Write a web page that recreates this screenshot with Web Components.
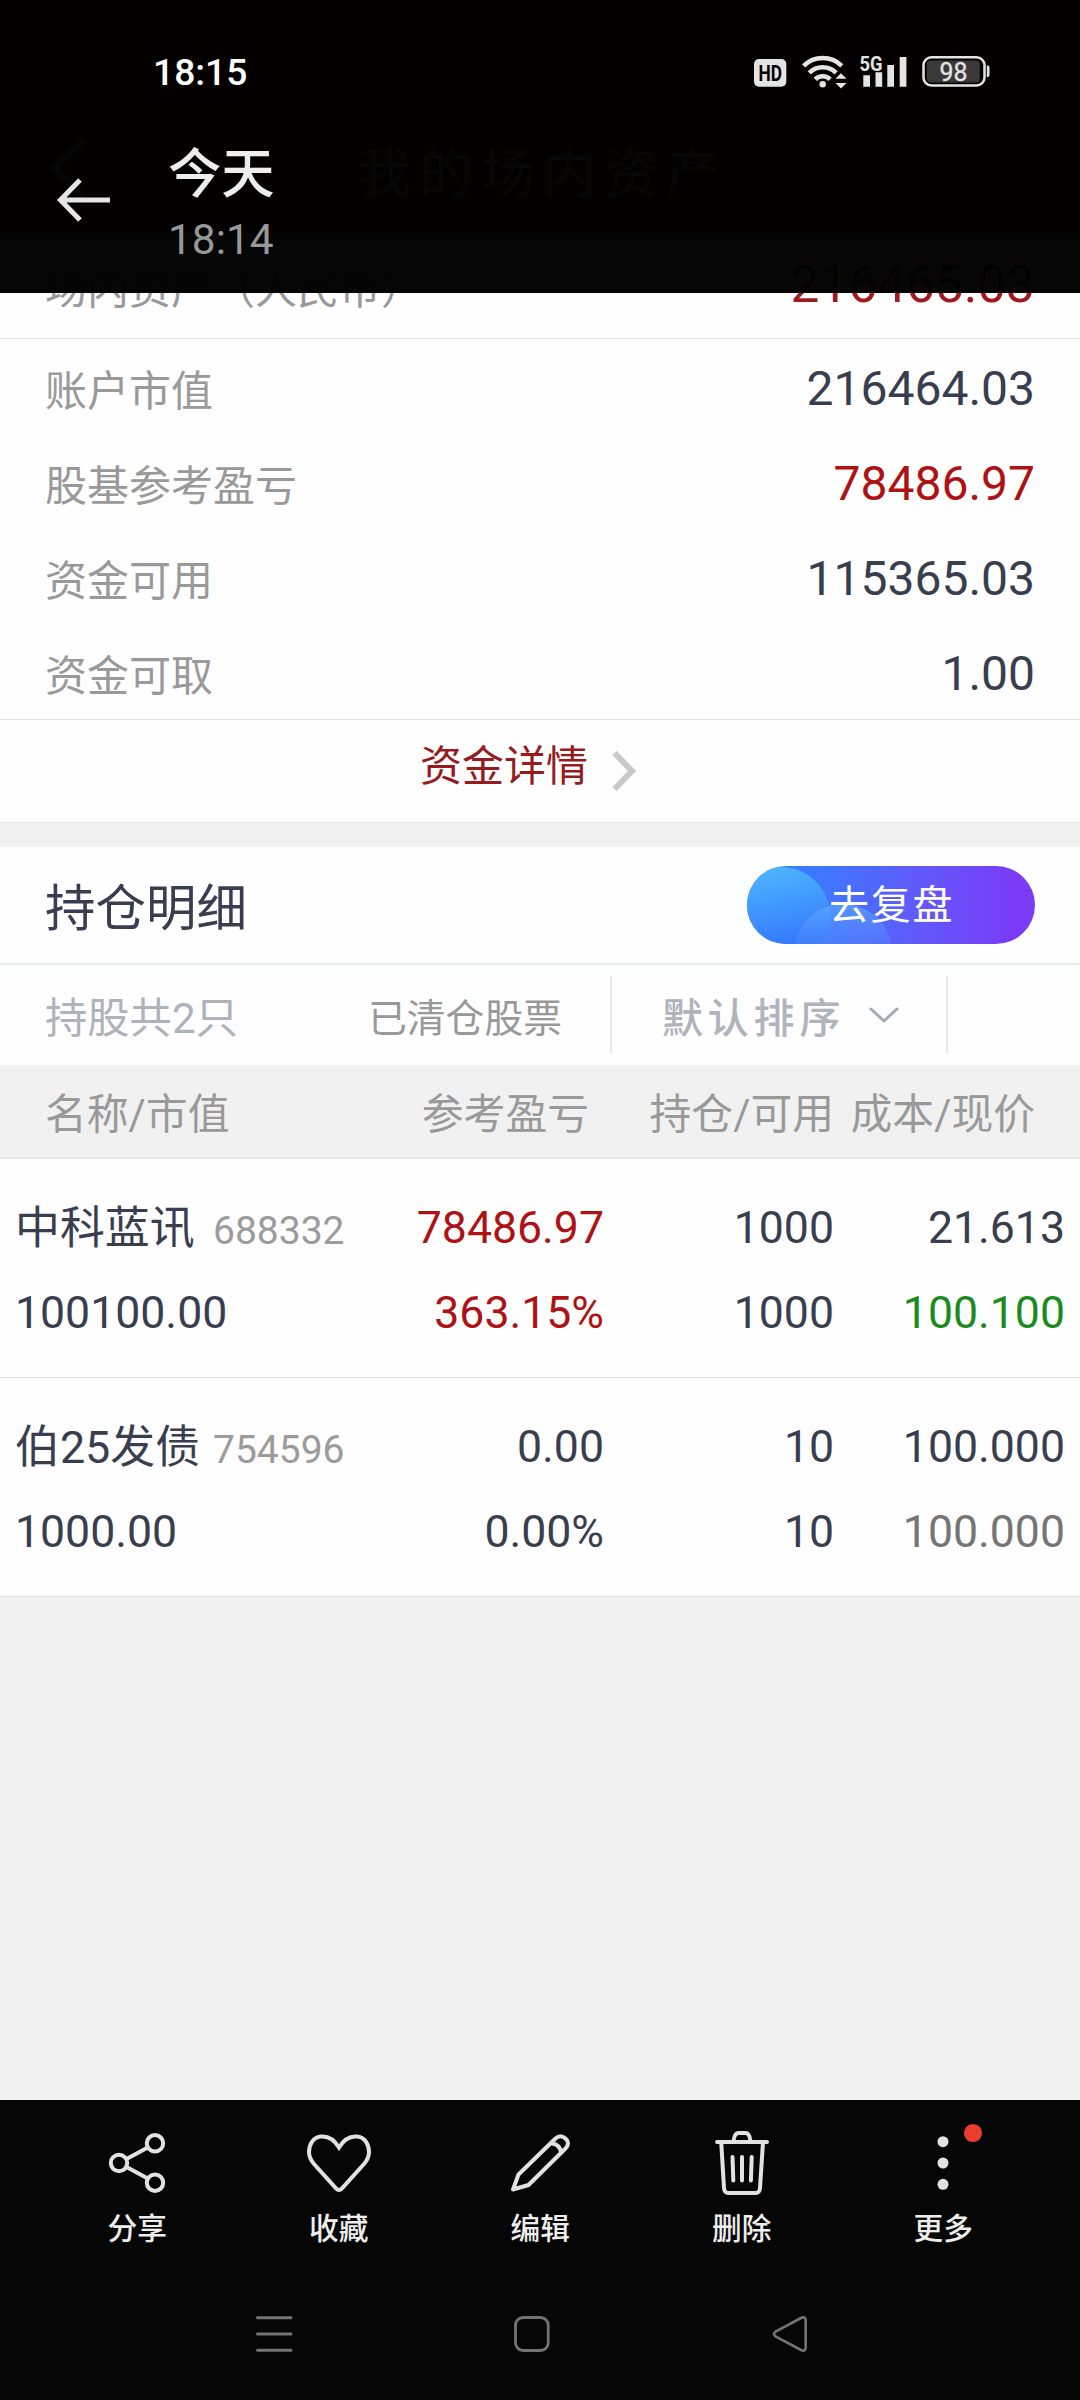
<!DOCTYPE html>
<html lang="zh-CN">
<head>
<meta charset="utf-8">
<title>我的场内资产</title>
<style>
html,body{margin:0;padding:0;background:#f1f1f1}
body{width:1080px;height:2400px;overflow:hidden;font-family:Roboto,"Noto Sans CJK SC",sans-serif;color:#383e50;--line:#e3e3e3;--red:#ae1214}
</style>
</head>
<body>
<photo-viewer>
  <account-page slot="photo">
    <app-header>我的场内资产</app-header>
    <fund-row label="场内资产（人民币）" value="216465.03" total></fund-row>
    <fund-list>
      <fund-row label="账户市值" value="216464.03"></fund-row>
      <fund-row label="股基参考盈亏" value="78486.97" tone="up"></fund-row>
      <fund-row label="资金可用" value="115365.03"></fund-row>
      <fund-row label="资金可取" value="1.00"></fund-row>
    </fund-list>
    <fund-link>资金详情</fund-link>
    <section-head>持仓明细<review-button slot="action">去复盘</review-button></section-head>
    <filter-bar><span slot="count">持股共2只</span><span slot="cleared">已清仓股票</span><span slot="sort">默认排序</span></filter-bar>
    <holding-head><span>名称/市值</span><span>参考盈亏</span><span>持仓/可用</span><span>成本/现价</span></holding-head>
    <holding-row name="中科蓝讯" code="688332" market="100100.00" profit="78486.97" rate="363.15%" qty="1000" avail="1000" cost="21.613" price="100.100" style="--profit:var(--red);--price:#1b8b20"></holding-row>
    <holding-row name="伯25发债" code="754596" market="1000.00" profit="0.00" rate="0.00%" qty="10" avail="10" cost="100.000" price="100.000" style="--price:#757575"></holding-row>
  </account-page>
  <viewer-top slot="top" day="今天" time="18:14"></viewer-top>
  <viewer-bottom slot="bottom">
    <tool-item label="分享" icon="share"></tool-item>
    <tool-item label="收藏" icon="heart"></tool-item>
    <tool-item label="编辑" icon="pencil"></tool-item>
    <tool-item label="删除" icon="trash"></tool-item>
    <tool-item label="更多" icon="more" badge></tool-item>
  </viewer-bottom>
</photo-viewer>
<script>
const define = (name, render) => customElements.define(name, class extends HTMLElement {
  constructor() {
    super();
    this.attachShadow({ mode: 'open' });
  }
  connectedCallback() {
    this.shadowRoot.innerHTML = render(this);
  }
});
const a = (el, n) => el.getAttribute(n) || '';

define('photo-viewer', () => `
<style>
:host{display:grid;width:1080px;height:2400px;grid-template:293px 1fr 300px / 1080px;overflow:hidden}
slot{display:grid;min-width:0;min-height:0}
.photo{grid-area:1/1/4/2}.top{grid-area:1/1/2/2}.bottom{grid-area:3/1/4/2}
</style>
<slot class="photo" name="photo"></slot><slot class="top" name="top"></slot><slot class="bottom" name="bottom"></slot>`);

define('account-page', () => `
<style>:host{display:flex;flex-direction:column;background:#f1f1f1;min-height:0}</style><slot></slot>`);

define('app-header', () => `
<style>
:host{display:grid;grid-template-columns:1fr auto 1fr;align-items:end;height:233px;box-sizing:border-box;padding:0 0 20px 5px;background:#a01818;color:#fff;font-size:54px;letter-spacing:7.8px;line-height:76px}
svg{display:block;margin:0 0 14px 43px}
</style>
<svg width="40" height="62" viewBox="0 0 40 62" fill="none" stroke="#fff" stroke-width="6"><path d="M36 3 6 31l30 28"/></svg><slot></slot><i></i>`);

define('fund-row', el => `
<style>
:host{display:flex;justify-content:space-between;align-items:center;height:95px;box-sizing:border-box;padding:5px 45px 0;background:#fefefe}
:host([total]){height:105px;padding-top:0}
.l{font-size:42px;line-height:60px;color:#999;padding-top:5px}
.v{font-size:48px;line-height:60px}
:host([tone=up]) .v{color:var(--red)}
:host([total]) .l{padding-top:8px}
:host([total]) .v{font-size:51.400px;padding-bottom:2px;color:#9f1a1e}
</style>
<span class="l">${a(el, 'label')}</span><span class="v">${a(el, 'value')}</span>`);

define('fund-list', () => `
<style>:host{display:block;border:solid var(--line);border-width:1px 0}</style><slot></slot>`);

define('fund-link', () => `
<style>
:host{display:flex;justify-content:center;align-items:center;gap:24px;height:103px;box-sizing:border-box;padding-right:24px;border-bottom:1px solid var(--line);background:#fefefe;color:#951b1e;font-size:42px;line-height:60px;margin-bottom:24px}
span{padding-bottom:8px}
</style>
<span><slot></slot></span>
<svg width="24" height="40" viewBox="0 0 24 40" fill="none" stroke="#c8c9cd" stroke-width="6"><path d="M2.500 2 20 20 2.500 38"/></svg>`);

define('section-head', () => `
<style>
:host{display:flex;justify-content:space-between;align-items:center;height:118px;box-sizing:border-box;padding:0 45px;border-bottom:2px solid #e6ebec;background:#fefefe;font-size:50.5px;line-height:70px}
span{padding-top:8px}
</style><span><slot></slot></span><slot name="action"></slot>`);

define('review-button', () => `
<style>
:host{display:grid;width:288px;height:78px;border-radius:39px;overflow:hidden;color:#fff;font-size:40px;letter-spacing:1.8px;line-height:78px}
svg,span{grid-area:1/1}
svg{display:block}
span{padding:1px 0 0 82px;height:77px}
</style>
<svg width="288" height="78" viewBox="0 0 288 78">
  <defs>
    <linearGradient id="bg"><stop offset="0" stop-color="#3580ff"/><stop offset=".25" stop-color="#3d78ff"/><stop offset=".6" stop-color="#6159fb"/><stop offset=".93" stop-color="#7a3bf6"/></linearGradient>
    <linearGradient id="c1" x1=".4" y1="0" x2=".6" y2="1"><stop offset="0" stop-color="#4db6ff"/><stop offset=".8" stop-color="#3478ff"/></linearGradient>
    <linearGradient id="c2" x1="0" y1="0" x2="0" y2="1"><stop offset="0" stop-color="#60b0ff" stop-opacity=".6"/><stop offset=".5" stop-color="#5a86ff" stop-opacity=".25"/></linearGradient>
  </defs>
  <rect width="288" height="78" fill="url(#bg)"/>
  <circle cx="34" cy="50" r="49" fill="url(#c1)"/>
  <circle cx="96" cy="87" r="49" fill="url(#c2)"/>
</svg><span><slot></slot></span>`);

define('filter-bar', () => `
<style>
:host{display:grid;grid-template-columns:322px 243px 338px 1fr;align-items:center;height:100px;box-sizing:border-box;padding-left:45px;background:#fefefe;line-height:60px}
.c{font-size:42.300px;color:#aeb2bb;padding-top:7px}
.d{font-size:38.800px;color:#999;padding:7px 0 0 1px}
.s{display:flex;align-items:center;height:78px;box-sizing:border-box;border:solid #e6ebec;border-width:0 2px;padding-left:50px;font-size:41px;font-weight:500;letter-spacing:4.8px;color:#b0b3bc}
.s span{padding-top:7px}
svg{margin-left:24px}
</style>
<span class="c"><slot name="count"></slot></span><span class="d"><slot name="cleared"></slot></span>
<div class="s"><span><slot name="sort"></slot></span>
<svg width="30" height="18" viewBox="0 0 30 18" fill="none" stroke="#9fabb7" stroke-width="3" stroke-linecap="round" stroke-linejoin="round"><path d="M2 3l13 12L28 3"/></svg></div>`);

define('holding-head', () => `
<style>
:host{display:grid;grid-template-columns:376px 168px 245px 201px;align-items:center;height:94px;box-sizing:border-box;padding:7px 0 0 45px;border-bottom:1px solid var(--line);background:#f1f1f1;color:#999;font-size:41.800px;line-height:60px;white-space:nowrap}
::slotted(span){text-align:right}
::slotted(span:first-child){text-align:left}
</style><slot></slot>`);

define('holding-row', el => `
<style>
:host{display:grid;grid-template-columns:390px 199px 230px 231px;height:219px;box-sizing:border-box;padding:27px 15px 0;border-bottom:1px solid var(--line);background:#fefefe;font-size:44.600px;line-height:85px;white-space:nowrap;text-align:right;grid-auto-rows:85px}
.n{display:grid;grid-template-columns:198px auto;align-items:baseline;text-align:left}
.n span{font-size:44.900px}
small{font-size:39px;color:#9b9b9b}
.l{text-align:left}
.p{color:var(--profit,inherit)}
.r{color:var(--price,inherit)}
</style>
<div class="n"><span>${a(el, 'name')}</span><small>${a(el, 'code')}</small></div>
<span class="p">${a(el, 'profit')}</span><span>${a(el, 'qty')}</span><span>${a(el, 'cost')}</span>
<span class="l">${a(el, 'market')}</span><span class="p">${a(el, 'rate')}</span><span>${a(el, 'avail')}</span><span class="r">${a(el, 'price')}</span>`);

define('viewer-top', el => `
<style>
:host{display:flex;flex-direction:column;background:rgba(0,0,0,.976)}
.t{display:flex;gap:56px;align-items:flex-start;padding-left:56px}
.t svg{margin-top:48px}
.d{display:flex;flex-direction:column;padding-top:9px}
b{font-size:53.300px;font-weight:500;color:#eee;line-height:76px}
i{font-style:normal;font-size:42.400px;line-height:54px;color:#989898}
</style>
<status-bar></status-bar>
<div class="t">
<svg width="56" height="48" viewBox="0 0 56 48" fill="none" stroke="#e5e5e5" stroke-width="5"><path d="M54 24H5M24 4 4.500 24l19.500 20"/></svg>
<div class="d"><b>${a(el, 'day')}</b><i>${a(el, 'time')}</i></div></div>`);

define('status-bar', () => `
<style>
:host{display:flex;justify-content:space-between;align-items:flex-start;height:128px;box-sizing:border-box;padding:50px 88px 0 153px}
.c{font-size:37.200px;font-weight:500;line-height:44px;color:#fff}
svg{display:block}
text{font-family:Roboto,sans-serif}
</style>
<span class="c">18:15</span>
<svg width="240" height="40" viewBox="752 50 240 40" fill="#e4e4e4">
  <rect x="754" y="59" width="32.300" height="27.700" rx="5"/>
  <text x="758.500" y="80.800" font-size="22" font-weight="700" fill="#050202" textLength="23.500" lengthAdjust="spacingAndGlyphs">HD</text>
  <g fill="none" stroke="#e4e4e4" stroke-width="4.600">
    <path d="M803.600 65.800a27.400 27.400 0 0 1 38.200 0"/>
    <path d="M809.300 72.800a19 19 0 0 1 26.800 0"/>
    <path d="M815.300 79.300a10.400 10.400 0 0 1 14.800 0"/>
  </g>
  <circle cx="822.700" cy="84.300" r="3.200"/>
  <path d="M841 73.300l5.600 5.400h-11.200zM841 88.500l5.600-5.600h-11.200z"/>
  <text x="859.500" y="70.500" font-size="20.500" font-weight="700" textLength="23" lengthAdjust="spacingAndGlyphs">5G</text>
  <path d="M863.300 75.300h6.700v11.400h-6.700zM875.500 72.300h6.700v14.400h-6.700zM887.300 65h6.700v21.700h-6.700zM899.700 57h6.700v29.700h-6.700z"/>
  <rect x="923.500" y="57.200" width="61" height="28.300" rx="8" fill="none" stroke="#e4e4e4" stroke-width="2.500"/>
  <rect x="926.800" y="60.500" width="53" height="22" rx="4" fill="#3a3838"/>
  <path d="M986.800 65.500h1q1.700 0 1.700 2v7.500q0 2-1.700 2h-1z"/>
  <text x="939.500" y="80.700" font-size="25" font-weight="400" stroke="#e4e4e4" stroke-width=".3" textLength="28" lengthAdjust="spacingAndGlyphs">98</text>
</svg>`);

define('viewer-bottom', () => `
<style>
:host{display:flex;flex-direction:column;background:rgba(0,0,0,.976)}
.tools{display:flex;height:168px;padding:0 36px 0 36.500px}
::slotted(tool-item){flex:1}
</style><div class="tools"><slot></slot></div><nav-keys></nav-keys>`);

const icons = {
  share: '<circle cx="17" cy="33" r="8.200"/><circle cx="53" cy="13.300" r="8.200"/><circle cx="53" cy="52.700" r="8.200"/><path d="M24.500 29 45.800 17.500M24.500 37 45.800 48.500"/>',
  heart: '<path d="M35 17.500C29.500 8.500 22.500 5.800 16.500 6.600 9 7.500 5 14.500 5 22c0 5 2 8.500 5 12l22 24.300q3 3 6 0L60 34c3-3.500 5-7 5-12 0-7.500-4-14.500-11.500-15.400C47.500 5.800 40.500 8.500 35 17.500z"/>',
  pencil: '<path d="M8 59.500 13.500 44.500 50.500 8.500Q55.500 4 60.500 8.500T60.500 18.500L23.500 55z M47 13.500q8 1 9 9" stroke-linejoin="round"/>',
  trash: '<path d="M10 12H60M14.200 12 17 58q.3 5 4.500 5h27q4.200 0 4.500-5L56 12M26.500 11q1-8 5-8h7q4 0 5 8M25.500 27 26.300 50.500M35 27v23.500M44.700 27 43.900 50.500"/>',
  more: '<g fill="#e2e2e2" stroke="none"><circle cx="35" cy="11.700" r="5.500"/><circle cx="35" cy="33" r="5.500"/><circle cx="35" cy="54.300" r="5.500"/></g>'
};
define('tool-item', el => `
<style>
:host{display:flex;flex-direction:column;align-items:center;padding-top:30px;color:#eee;font-size:29.700px;font-weight:500;line-height:40px}
svg{display:block;overflow:visible;margin-bottom:9px}
</style>
<svg width="70" height="70" viewBox="0 0 70 70" fill="none" stroke="#e2e2e2" stroke-width="4" stroke-linecap="round">${icons[a(el, 'icon')]}${el.hasAttribute('badge') ? '<circle cx="65" cy="3" r="9.100" fill="#ec3b2f" stroke="none"/>' : ''}</svg>
<span>${a(el, 'label')}</span>`);

define('nav-keys', () => `
<style>:host{display:flex;justify-content:space-between;height:132px;box-sizing:border-box;padding:46px 270px 0 254px}svg{display:block}</style>
<svg width="40" height="40" fill="none" stroke="#737373" stroke-width="3" stroke-linecap="round"><path d="M3.500 3.700h33.500M3.500 20h33.500M3.500 36.300h33.500"/></svg>
<svg width="40" height="40" fill="none" stroke="#737373" stroke-width="2.800"><rect x="3.500" y="3.500" width="32.700" height="33" rx="7.500"/></svg>
<svg width="40" height="40" fill="none" stroke="#737373" stroke-width="2.600"><path d="M5.500 17.700 31 4q4.700-2 4.700 2.500v27q0 4.500-4.700 2.500L5.500 22.300q-3-2.300 0-4.600z"/></svg>`);
</script>
</body>
</html>
